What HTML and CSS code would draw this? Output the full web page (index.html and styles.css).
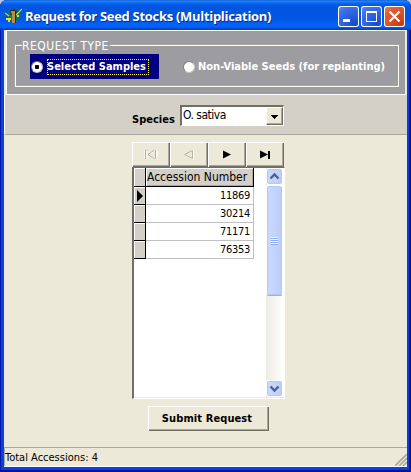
FILE: index.html
```html
<!DOCTYPE html>
<html lang="en">
<head>
<meta charset="utf-8">
<title>Request for Seed Stocks (Multiplication)</title>
<link rel="stylesheet" href="styles.css">
</head>
<body>
<div class="window">
  <header class="titlebar">
    <svg class="app-icon" width="18" height="16" viewBox="0 0 18 16">
      <path d="M5 1h6l4 3v6l-3 3H6l-3-3V4z" fill="#087568"/>
      <path d="M5 2l5-1 3 3-3 2-5 1z" fill="#12504a"/>
      <path d="M11 7l6-6M0 5l4 3" stroke="#c5d326" stroke-width="1.2"/>
      <path d="M1 10h5v2H5v2H3v-2H1zM12 7h2v2h-2z" fill="#e9e020"/>
      <path d="M6 3h4v12H7V5H6z" fill="#b98b42"/>
      <path d="M10 3h1v12h-1zM5 2h5v1H5z" fill="#342818"/>
    </svg>
    <h1 class="title">Request for Seed Stocks (Multiplication)</h1>
    <div class="controls">
      <span class="control"><svg width="21" height="21"><path d="M5 13h7v3H5z" fill="#fff"/></svg></span>
      <span class="control"><svg width="21" height="21" shape-rendering="crispEdges"><path d="M5 5h11v11H5zM6 7v8h9V7z" fill="#fff" fill-rule="evenodd"/></svg></span>
      <span class="control close"><svg width="21" height="21"><path d="M5.500 5.500l10 10m0-10l-10 10" stroke="#fff" stroke-width="2.200"/></svg></span>
    </div>
  </header>
  <main class="client">
    <section class="type-panel">
      <fieldset class="group">
        <legend class="t-legend">REQUEST TYPE</legend>
        <label class="choice selected"><i class="radio on"></i><span class="focus"><b class="t-selected">Selected Samples</b></span></label>
        <label class="choice"><i class="radio"></i><b class="t-other">Non-Viable Seeds (for replanting)</b></label>
      </fieldset>
    </section>
    <section class="species-panel">
      <b class="t-species">Species</b>
      <div class="combo"><span class="t-sativa">O. sativa</span>
        <span class="combo-button"><svg width="15" height="16" shape-rendering="crispEdges"><path d="M4 7h7v1h-1v1H9v1H8v1H7v-1H6V9H5V8H4z"/></svg></span>
      </div>
    </section>
    <section class="records">
      <nav class="navigator">
        <span class="nav off"><svg width="38" height="25"><path d="M15 17V8h-2v8M25 17V8M23.500 8L17 12.500l6.500 4.500" stroke="#fff" fill="none"/><path d="M13.500 17V8h2M23.500 8v9M22.500 8L16 12.500l6.500 4" stroke="#b8b4a2" fill="none"/></svg></span>
        <span class="nav off"><svg width="38" height="25"><path d="M23.500 8v9.500L14.500 12.500" stroke="#fff" fill="none"/><path d="M22.500 16.500v-8l-8 4z" stroke="#b8b4a2" fill="none"/></svg></span>
        <span class="nav"><svg width="38" height="25"><path d="M15 8.500l8 4-8 4z"/></svg></span>
        <span class="nav"><svg width="38" height="25"><path d="M14 8.500l8 4-8 4zM22 9h2v8h-2z"/></svg></span>
      </nav>
      <div class="grid">
        <table>
          <tr><th class="mark"></th><th class="head"><span class="t-head">Accession Number</span></th></tr>
          <tr><td class="mark"><svg width="10" height="16"><path d="M3 2l6 6-6 6z"/></svg></td><td class="num">11869</td></tr>
          <tr><td class="mark"></td><td class="num">30214</td></tr>
          <tr><td class="mark"></td><td class="num">71171</td></tr>
          <tr><td class="mark"></td><td class="num">76353</td></tr>
        </table>
        <div class="scrollbar">
          <span class="arrow"><svg width="15" height="15"><path d="M3.500 9.500l4-4 4 4" stroke="#4d6185" stroke-width="2.400" fill="none"/></svg></span>
          <span class="thumb"><i class="grip"></i></span>
          <span class="arrow down"><svg width="15" height="15"><path d="M3.500 5.500l4 4 4-4" stroke="#4d6185" stroke-width="2.400" fill="none"/></svg></span>
        </div>
      </div>
      <button class="submit"><span class="t-submit">Submit Request</span></button>
    </section>
    <footer class="status">
      <span class="t-status">Total Accessions: 4</span>
      <svg class="size-grip" width="12" height="12"><path d="M0 12L12 0M4 12l8-8M8 12l4-4" stroke="#aca899" stroke-width="1.600"/></svg>
    </footer>
  </main>
</div>
</body>
</html>
```
FILE: styles.css
```css
* { box-sizing: border-box; }
body { margin: 0; background: #b9c5df; font: 11px/14px "DejaVu Sans Condensed", "DejaVu Sans", sans-serif; color: #000; }
span, b, h1, legend { white-space: nowrap; }
svg { display: block; }
.window { width: 411px; height: 472px; padding: 0 4px 5px; border-radius: 7px 7px 0 0; overflow: hidden; background: #0842d8; box-shadow: inset 1px 0 #0018a8, inset -2px 0 #00139c, inset 0 -2px #00139c; }
.titlebar { height: 30px; margin: 0 -4px; padding: 1px 6px 0 5px; display: flex; align-items: center; background: linear-gradient(#0754cf 0, #2b87f7 1px, #0868ee 3px, #0055e0 6px, #0055e3 18px, #0362fa 25px, #0260f5 27px, #0046cf 29px, #003bbd); }
.app-icon { margin-top: 1px; }
.title { margin: 1px 0 0 2px; font: bold 13px/18px "Open Sans", sans-serif; color: #fff; text-shadow: 1px 1px #0b2c83; letter-spacing: -.3px; }
.controls { margin-left: auto; display: flex; gap: 2px; padding-top: 2px; }
.control { width: 21px; height: 21px; border-radius: 3px; background: radial-gradient(circle at 80% 90%, #1648c8, #3a70ec 70%, #5c8ff5); box-shadow: inset 0 0 0 1px #fff; }
.control.close { background: radial-gradient(circle at 80% 90%, #c63b12, #e35b35 70%, #ee8c70); }
.client { height: 437px; background: #ece9d8; display: flex; flex-direction: column; border-bottom: 1px solid #fff; }
.client > * { flex-shrink: 0; }
.type-panel { height: 65px; border-top: 1px solid #fff; border-bottom: 1px solid #fff; margin: 0 2px 0 2px; border-left: 1px solid #fff; background: #9d9da1; padding: 8px 6px 0 8px; }
.group { position: relative; margin: 6px 0 0; padding: 8px 0 0 14px; height: 42px; border: 1px solid #fffef2; box-shadow: inset 0 -1px #aca899, -1px 0 #aca899, 0 -1px #aca899; display: flex; }
.group legend { position: absolute; top: -8px; left: 6px; height: 15px; width: 88px; padding: 0; background: #9d9da1; color: #fff; font-size: 12px; line-height: 17px; letter-spacing: .5px; }
.choice { display: flex; align-items: center; height: 25px; color: #fff; }
.selected { width: 129px; background: #000080; padding-left: 1px; margin-right: 24px; }
.radio { width: 12px; height: 12px; border-radius: 50%; background: #fff; border: 1px solid #c7c4b8; border-top-color: #817e75; border-left-color: #817e75; }
.radio.on { background: radial-gradient(circle, #000 0 2px, #fff 2.5px); }
.focus { margin-left: 4px; width: 102px; height: 16px; border: 1px dotted #ffff40; line-height: 14px; }
.t-selected { margin-left: -1px; }
.t-other { margin-left: 3px; }
.species-panel { height: 40px; margin: 0; border-bottom: 1px solid #aca899; border-left: 1px solid #fff; background: #d4d0c8; display: flex; padding: 10px 0 0 127px; }
.t-species { width: 48px; padding-top: 8px; }
.combo { width: 104px; height: 21px; border: 1px solid #fff; border-top: 2px solid #716f64; border-left: 2px solid #716f64; background: #fff; display: flex; justify-content: space-between; padding: 0 0 0 1px; }
.t-sativa { line-height: 17px; font-size: 12px; letter-spacing: -.5px; }
.combo-button { width: 17px; height: 18px; background: #ece9d8; border: 1px solid #fff; border-right: 1px solid #716f64; border-bottom: 1px solid #716f64; box-shadow: inset -1px -1px #aca899; }
.records { width: 153px; height: 289px; margin: 7px 0 0 128px; }
.navigator { display: flex; width: 152px; }
.nav { width: 38px; height: 25px; box-shadow: inset 1px 1px #fff, inset -1px -1px #716f64, inset -2px -2px #aca899; }
.grid { height: 232px; width: 153px; background: #fff; border: 1px solid #fff; border-top-color: #716f64; border-left: 2px solid #716f64; border-right-color: #fff; display: flex; justify-content: space-between; padding-right: 1px; box-shadow: inset 0 -1px #ece9d8; }
table { border-collapse: separate; border-spacing: 0; width: 120px; height: 91px; table-layout: fixed; }
th, td { padding: 0; font-weight: normal; height: 18px; }
tr:first-child > th { height: 19px; }
.mark { width: 12px; background: #d4d0c8; border-right: 1px solid #000; border-bottom: 1px solid #000; box-shadow: inset 1px 1px #fff; }
.head { text-align: left; font-size: 12px; background: #d4d0c8; padding: 0 0 0 1px; border-right: 1px solid #000; border-bottom: 1px solid #000; box-shadow: inset 1px 1px #fff, inset -1px -1px #aca899; }
.num { text-align: right; padding: 1px 3px 0 0; letter-spacing: -.3px; border-right: 1px solid #c0c0c0; border-bottom: 1px solid #c0c0c0; }
.scrollbar { width: 17px; height: 229px; background: linear-gradient(90deg, #eeede5, #fefefb); display: flex; flex-direction: column; }
.arrow, .thumb { border: 1px solid #fff; border-radius: 3px; background: linear-gradient(90deg, #cbdafe, #bacdfb); box-shadow: inset 0 0 0 1px #b4c8f6; }
.arrow { height: 17px; }
.thumb { height: 111px; display: grid; place-items: center; border-bottom-color: #98b0e5; }
.down { margin-top: auto; }
.grip { width: 7px; height: 8px; background: repeating-linear-gradient(#eef4fe 0 1px, #8cb0f8 1px 2px); }
.submit { display: block; width: 121px; height: 25px; margin: 7px 0 0 16px; padding: 0 3px 0 0; background: #ece9d8; border: 0; font: bold 11px/14px "DejaVu Sans Condensed", "DejaVu Sans", sans-serif; color: #000; letter-spacing: .1px; box-shadow: inset 1px 1px #fff, inset -1px -1px #716f64, inset -2px -2px #aca899; }
.status { margin-top: auto; height: 19px; border-top: 1px solid #aca899; display: flex; justify-content: space-between; padding-left: 1px; box-shadow: inset 1px 0 #aca899; }
.t-status { line-height: 20px; }
.size-grip { align-self: flex-end; }
```
